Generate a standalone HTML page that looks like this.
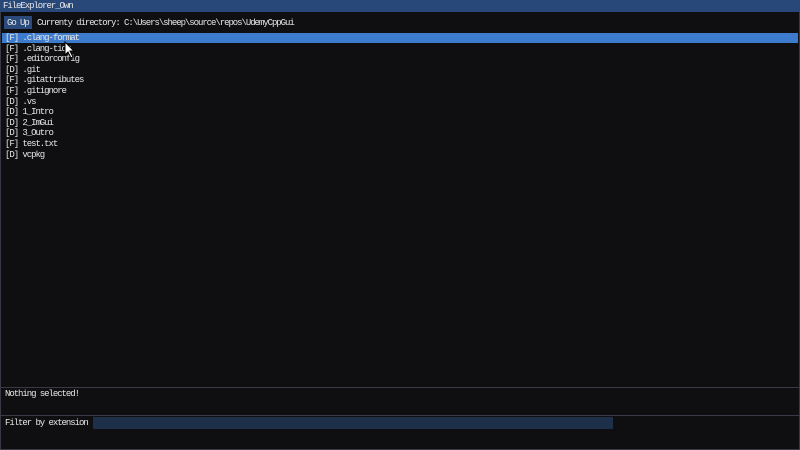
<!DOCTYPE html>
<html><head><style>
body{margin:0;width:800px;height:450px;background:#0f0f11;overflow:hidden;font-family:"Liberation Mono","DejaVu Sans Mono",monospace;font-size:9px;color:#e6e6e6;letter-spacing:-1.05px;position:relative}
.t{position:absolute;white-space:pre;line-height:10.6px}
#title{position:absolute;left:0;top:0;width:800px;height:12px;background:#29487a}
#btn{position:absolute;left:4px;top:16px;width:28px;height:13px;background:#294a7a}
#sel{position:absolute;left:2px;top:33px;width:796px;height:10px;background:#3d7ccc}
.sep{position:absolute;left:1px;width:798px;height:1px;background:#3a3a44}
#inp{position:absolute;left:93px;top:417px;width:520px;height:12px;background:#1e2f4a}
#frame{position:absolute;left:0;top:0;width:798px;height:448px;border:1px solid #3a3a44}
</style></head><body>
<div id="frame"></div>
<div id="title"></div>
<div class="t" style="left:3px;top:1px">FileExplorer_Own</div>
<div id="btn"></div>
<div class="t" style="left:7px;top:17.5px">Go Up</div>
<div class="t" style="left:37px;top:17.5px">Currenty directory: C:\Users\sheep\source\repos\UdemyCppGui</div>
<div id="sel"></div>
<div class="t" style="left:5px;top:33px">[F] .clang-format
[F] .clang-tidy
[F] .editorconfig
[D] .git
[F] .gitattributes
[F] .gitignore
[D] .vs
[D] 1_Intro
[D] 2_ImGui
[D] 3_Outro
[F] test.txt
[D] vcpkg</div>
<div class="sep" style="top:387px"></div>
<div class="t" style="left:5px;top:389px">Nothing selected!</div>
<div class="sep" style="top:415px"></div>
<div class="t" style="left:5px;top:417.5px">Filter by extension</div>
<div id="inp"></div>
<svg style="position:absolute;left:64px;top:41px" width="12" height="18" viewBox="0 0 12 18"><path d="M1 1 L1 14 L4 11 L7 17 L9 16 L6 10 L10 10 Z" fill="#fff" stroke="#000" stroke-width="1"/></svg>
</body></html>
